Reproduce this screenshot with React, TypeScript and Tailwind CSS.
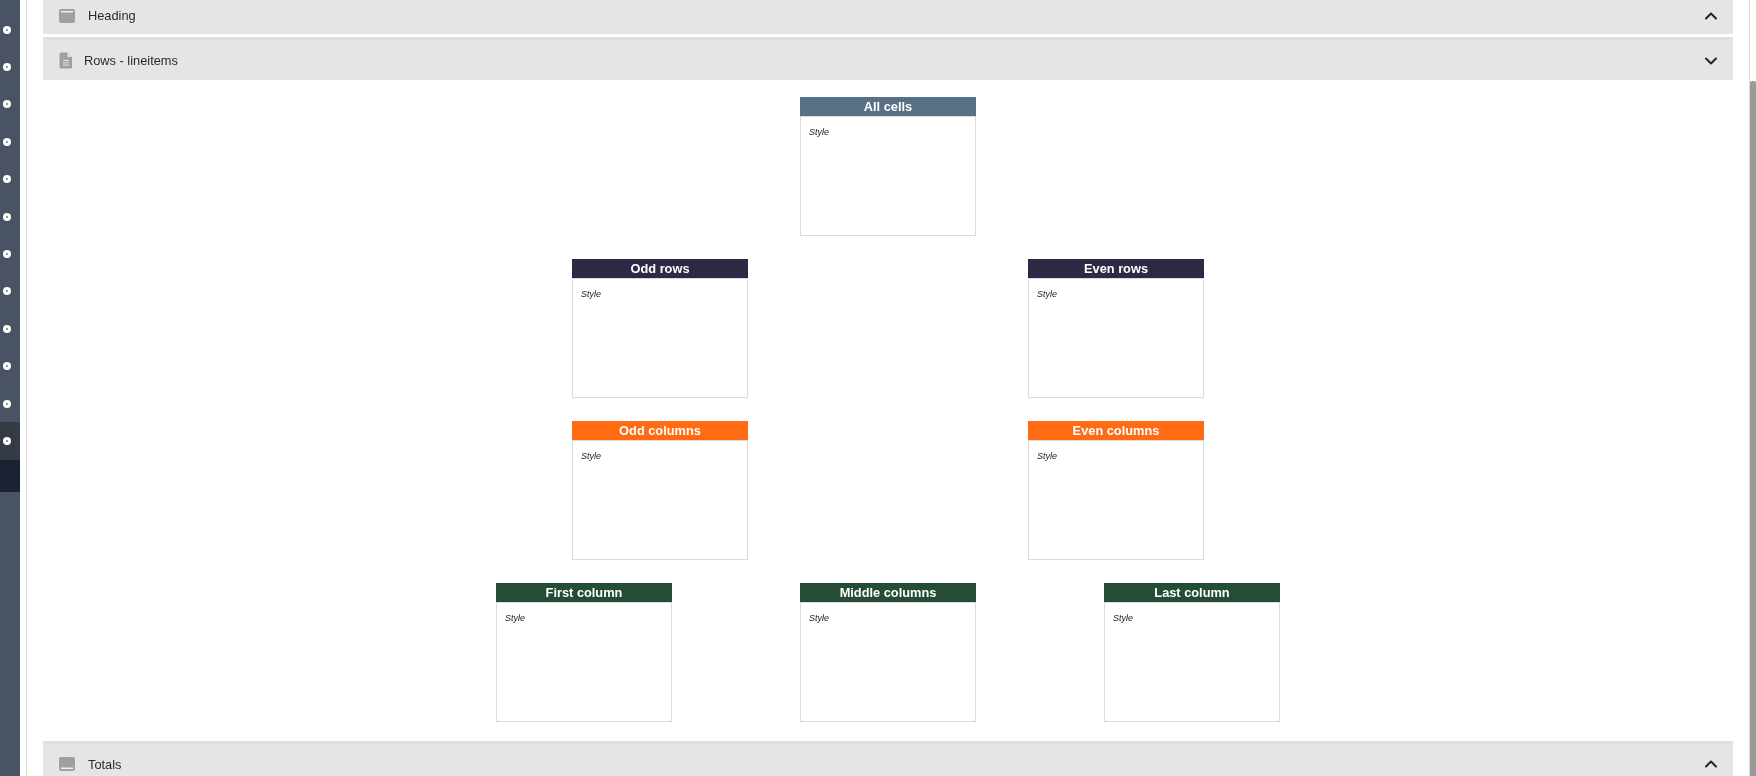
import { ChevronDown, ChevronUp } from "lucide-react";

const dots = Array.from({ length: 12 }, (_, i) => i);

const TopBarIcon = () => (
  <svg width="18" height="16" viewBox="0 0 18 16">
    <rect x="1" y="1" width="16" height="14" rx="2" fill="#a0a0a0" />
    <rect x="3" y="3" width="12" height="1.5" fill="#f0f0f0" />
  </svg>
);

const BottomBarIcon = () => (
  <svg width="18" height="16" viewBox="0 0 18 16" className="mt-[1px]">
    <rect x="1" y="1" width="16" height="14" rx="2" fill="#a0a0a0" />
    <rect x="3" y="11.5" width="12" height="1.5" fill="#f0f0f0" />
  </svg>
);

const FileIcon = () => (
  <svg width="14" height="17" viewBox="0 0 14 17">
    <path d="M2 0.5h6.5l4.5 4.5v10a1.5 1.5 0 0 1-1.5 1.5h-9.5a1.5 1.5 0 0 1-1.5-1.5v-13a1.5 1.5 0 0 1 1.5-1.5z" fill="#a0a0a0" />
    <path d="M8.5 0.5v4.5h4.5" fill="#e4e4e4" />
    <path d="M4 8.5h6M4 10.8h6M4 13.1h6" stroke="#e8e8e8" strokeWidth="1" />
  </svg>
);

const StyleBox = ({ title, color }: { title: string; color: string }) => (
  <div className="w-[176px] h-[139px] flex flex-col border border-[#dcdcdc]">
    <div className={`-mx-px -mt-px h-[19px] shrink-0 text-center text-white text-[12.8px] leading-[20px] font-bold ${color}`}>
      {title}
    </div>
    <div className="pl-[8px] pt-[9px] border-t border-t-[#dcdcdc] text-[9px] leading-[12px] italic text-[#222]">Style</div>
  </div>
);

export default function App() {
  return (
    <div className="h-[776px] w-[1756px] flex overflow-hidden font-['Liberation_Sans',Arial,sans-serif] text-[#2b2b2b] will-change-transform">
      {/* sidebar, mostly scrolled off to the left */}
      <div className="w-[20px] shrink-0 flex flex-col bg-[#4a5364] pt-[11px]">
        {dots.map((i) => (
          <div
            key={i}
            className={`h-[37.4px] shrink-0 flex items-center pl-[3px] ${i === 11 ? "bg-[#343b47]" : ""}`}
          >
            <div className="w-[8px] h-[8px] rounded-full bg-white flex items-center justify-center">
              <div className="w-[2px] h-[2px] rounded-full bg-[#777]" />
            </div>
          </div>
        ))}
        <div className="h-[32px] shrink-0 bg-[#1a2233]" />
      </div>

      <div className="w-[6px] shrink-0" />

      <div className="flex-1 border-x border-x-[#dddddd] pl-[16px] pr-[16px] flex flex-col min-w-0">
        <div className="h-[34px] shrink-0 bg-[#e5e5e5] flex items-center pb-[3px] pl-[15px] pr-[12px]">
          <TopBarIcon />
          <span className="ml-[12px] text-[12.8px]">Heading</span>
          <ChevronUp className="ml-auto text-[#222]" size={20} strokeWidth={2.4} />
        </div>
        <div className="h-[3px] shrink-0" />
        <div className="h-[43px] shrink-0 bg-[#e5e5e5] border-t-[3px] border-t-[#e0e0e0] flex items-center pt-[1px] pl-[16px] pr-[12px]">
          <FileIcon />
          <span className="ml-[11px] text-[12.8px]">Rows - lineitems</span>
          <ChevronDown className="ml-auto text-[#222]" size={20} strokeWidth={2.4} />
        </div>

        <div className="flex flex-col gap-[23px] pt-[17px]">
          <div className="flex justify-center">
            <StyleBox title="All cells" color="bg-[#587084]" />
          </div>
          <div className="flex justify-center gap-[280px]">
            <StyleBox title="Odd rows" color="bg-[#2c2a45]" />
            <StyleBox title="Even rows" color="bg-[#2c2a45]" />
          </div>
          <div className="flex justify-center gap-[280px]">
            <StyleBox title="Odd columns" color="bg-[#ff6a13]" />
            <StyleBox title="Even columns" color="bg-[#ff6a13]" />
          </div>
          <div className="flex justify-center gap-[128px]">
            <StyleBox title="First column" color="bg-[#254c36]" />
            <StyleBox title="Middle columns" color="bg-[#254c36]" />
            <StyleBox title="Last column" color="bg-[#254c36]" />
          </div>
        </div>

        <div className="mt-[19px] h-[60px] shrink-0 bg-[#e5e5e5] border-t-[3px] border-t-[#e0e0e0] flex items-start pl-[15px] pr-[12px] pt-[11px]">
          <BottomBarIcon />
          <span className="ml-[12px] text-[12.8px]">Totals</span>
          <ChevronUp className="ml-auto -mt-[1px] text-[#222]" size={20} strokeWidth={2.4} />
        </div>
      </div>

      {/* scrollbar */}
      <div className="w-[6px] shrink-0 flex flex-col">
        <div className="h-[81px] shrink-0" />
        <div className="flex-1 bg-[#9a9a9a] rounded-t-[2px]" />
      </div>
    </div>
  );
}
